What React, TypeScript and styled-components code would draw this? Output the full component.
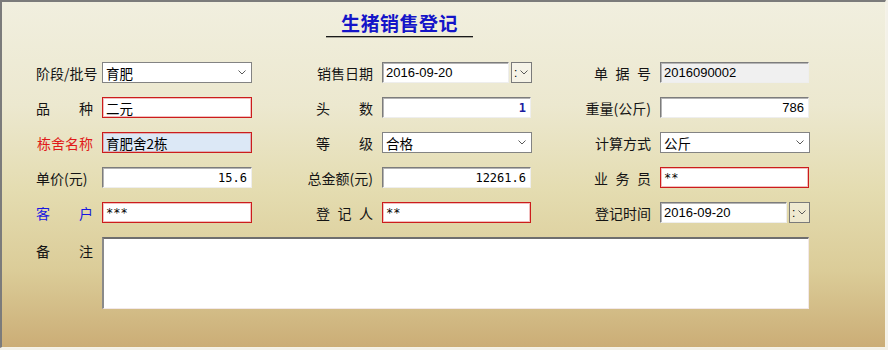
import React from 'react'
import styled, { createGlobalStyle, css } from 'styled-components'

const GlobalStyle = createGlobalStyle`
  html, body {
    margin: 0;
    padding: 0;
    background: #f3f1e8;
  }
  body {
    font-family: "Noto Sans CJK SC", "Liberation Sans", sans-serif;
  }
`

const Window = styled.div`
  box-sizing: border-box;
  width: 886px;
  height: 348px;
  border-top: 2px solid #7b7b7b;
  border-left: 2px solid #7b7b7b;
  border-right: 1px solid #f6f3e8;
  border-bottom: 1px solid #f6f3e8;
  background: linear-gradient(180deg, #f1efdf 0%, #ece8cf 30%, #e4dcb0 55%, #dbcc98 78%, #cbad76 100%);
`

const Title = styled.div`
  width: 147px;
  margin: 10px 0 0 324px;
  padding-bottom: 2px;
  border-bottom: 1px solid #1a1a1a;
  box-shadow: 0 1px 0 rgba(0, 0, 0, 0.3);
  text-align: center;
  font-size: 19px;
  line-height: 22px;
  font-weight: 700;
  color: #1414c8;
  letter-spacing: 0.5px;
`

const Form = styled.div`
  display: flex;
  flex-direction: column;
  gap: 14px;
  margin-top: 25px;
  padding-left: 34px;
`

const Row = styled.div`
  display: grid;
  grid-template-columns: 280px 278px 215px;
`

const Field = styled.div<{ $top?: boolean }>`
  display: flex;
  align-items: ${p => (p.$top ? 'flex-start' : 'center')};
  gap: 9px;
`

const LabelBox = styled.div<{ $spread?: boolean; $start?: boolean; $color?: string; $top?: boolean }>`
  flex: 0 0 57px;
  width: 57px;
  min-width: 0;
  display: flex;
  justify-content: ${p => (p.$spread ? 'space-between' : p.$start ? 'flex-start' : 'flex-end')};
  white-space: nowrap;
  font-size: 14px;
  line-height: 18px;
  color: ${p => p.$color || '#141414'};
  margin-top: ${p => (p.$top ? '5px' : '0')};
`

function Label({ text, spread, start, color, top }: { text: string; spread?: boolean; start?: boolean; color?: string; top?: boolean }) {
  return (
    <LabelBox $spread={spread} $start={start} $color={color} $top={top}>
      {spread ? text.split('').map((c, i) => <span key={i}>{c}</span>) : <span>{text}</span>}
    </LabelBox>
  )
}

const sunken = css`
  border-style: solid;
  border-width: 1px;
  border-color: #7c7c7c #eeeeee #eeeeee #7c7c7c;
  box-shadow: inset 1px 1px 0 #b4b4b4;
`

const redEdge = css`
  border: 1px solid #cc1c1c;
  box-shadow: inset 0 0 0 1px rgba(214, 70, 70, 0.35);
`

type Font = 'cjk' | 'mono' | 'sans'

const fontFor = (f?: Font) => {
  if (f === 'mono') return css`font-family: "DejaVu Sans Mono", "Liberation Mono", monospace; font-size: 12px;`
  if (f === 'sans') return css`font-family: "Liberation Sans", Arial, sans-serif; font-size: 13px;`
  return css`font-family: "Noto Sans CJK SC", "Liberation Sans", sans-serif; font-size: 13.5px;`
}

const TextBox = styled.input<{ $w?: number; $red?: boolean; $bg?: string; $right?: boolean; $font?: Font; $ink?: string; $bold?: boolean }>`
  box-sizing: border-box;
  flex: 0 0 auto;
  width: ${p => p.$w || 150}px;
  height: 21px;
  margin: 0;
  padding: 0 4px 0 3px;
  outline: none;
  background: ${p => p.$bg || '#ffffff'};
  color: ${p => p.$ink || '#000000'};
  font-weight: ${p => (p.$bold ? 700 : 400)};
  text-align: ${p => (p.$right ? 'right' : 'left')};
  ${p => fontFor(p.$font)}
  ${p => (p.$red ? redEdge : sunken)}
`

const Combo = styled.div<{ $w?: number }>`
  box-sizing: border-box;
  flex: 0 0 auto;
  width: ${p => p.$w || 150}px;
  height: 21px;
  display: flex;
  align-items: center;
  justify-content: space-between;
  padding: 0 5px 0 3px;
  background: #ffffff;
  border: 1px solid #838383;
  font-size: 13.5px;
  color: #000;
`

const DateGroup = styled.div`
  display: flex;
  align-items: center;
  gap: 2px;
`

const SpinButton = styled.div`
  box-sizing: border-box;
  width: 21px;
  height: 21px;
  display: flex;
  align-items: center;
  padding-left: 2px;
  gap: 3px;
  border: 1px solid #7a7a7a;
  background: rgba(255, 255, 255, 0.45);
  font-family: "Liberation Sans", sans-serif;
  font-size: 12px;
  color: #000;
`

const Memo = styled.textarea`
  box-sizing: border-box;
  width: 707px;
  height: 72px;
  margin: 0;
  resize: none;
  outline: none;
  background: #ffffff;
  border-style: solid;
  border-width: 2px 1px 1px 2px;
  border-color: #6e6e6e #f2e8e8 #f2e8e8 #8a8a8a;
`

function Chevron() {
  return (
    <svg width="8" height="5" viewBox="0 0 8 5">
      <polyline points="0.5,0.5 4,4 7.5,0.5" fill="none" stroke="#5a5a5a" strokeWidth="1" />
    </svg>
  )
}

function ComboBox({ value }: { value: string }) {
  return (
    <Combo>
      <span>{value}</span>
      <Chevron />
    </Combo>
  )
}

function DateBox({ value }: { value: string }) {
  return (
    <DateGroup>
      <TextBox readOnly value={value} $w={127} $font="sans" />
      <SpinButton>
        <span>:</span>
        <Chevron />
      </SpinButton>
    </DateGroup>
  )
}

export default function App() {
  return (
    <>
      <GlobalStyle />
      <Window>
        <Title>生猪销售登记</Title>
        <Form>
          <Row>
            <Field>
              <Label text="阶段/批号" start />
              <ComboBox value="育肥" />
            </Field>
            <Field>
              <Label text="销售日期" />
              <DateBox value="2016-09-20" />
            </Field>
            <Field>
              <Label text="单据号" spread />
              <TextBox readOnly value="2016090002" $w={149} $bg="#f0f0f0" $font="sans" />
            </Field>
          </Row>
          <Row>
            <Field>
              <Label text="品种" spread />
              <TextBox readOnly value="二元" $red />
            </Field>
            <Field>
              <Label text="头数" spread />
              <TextBox readOnly value="1" $w={149} $right $font="mono" $bold $ink="#1c1ca0" />
            </Field>
            <Field>
              <Label text="重量(公斤)" />
              <TextBox readOnly value="786" $w={149} $right $font="sans" />
            </Field>
          </Row>
          <Row>
            <Field>
              <Label text="栋舍名称" color="#e01a1a" />
              <TextBox readOnly value="育肥舍2栋" $red $bg="#dce8f6" />
            </Field>
            <Field>
              <Label text="等级" spread />
              <ComboBox value="合格" />
            </Field>
            <Field>
              <Label text="计算方式" />
              <ComboBox value="公斤" />
            </Field>
          </Row>
          <Row>
            <Field>
              <Label text="单价(元)" start />
              <TextBox readOnly value="15.6" $right $font="mono" />
            </Field>
            <Field>
              <Label text="总金额(元)" />
              <TextBox readOnly value="12261.6" $w={149} $right $font="mono" />
            </Field>
            <Field>
              <Label text="业务员" spread />
              <TextBox readOnly value="**" $w={149} $red $font="mono" />
            </Field>
          </Row>
          <Row>
            <Field>
              <Label text="客户" spread color="#1818e0" />
              <TextBox readOnly value="***" $red $font="mono" />
            </Field>
            <Field>
              <Label text="登记人" spread />
              <TextBox readOnly value="**" $w={149} $red $font="mono" />
            </Field>
            <Field>
              <Label text="登记时间" />
              <DateBox value="2016-09-20" />
            </Field>
          </Row>
          <Field $top>
            <Label text="备注" spread top />
            <Memo readOnly />
          </Field>
        </Form>
      </Window>
    </>
  )
}
